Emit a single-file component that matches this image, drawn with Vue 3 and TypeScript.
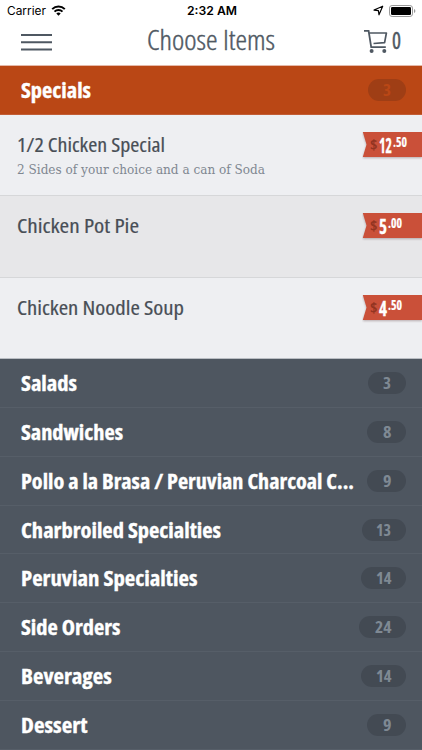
<script setup lang="ts">
import { h } from 'vue'

interface Item {
  title: string
  width: number
  note?: string
  dollars: string
  dollarsWidth: number
  cents: string
}
interface Category {
  name: string
  width: number
  count: number
  pill: number
  digits: number
}

// One line of condensed type: glyphs are narrowed to the given advance width.
const FitText = (props: { text: string; w: number; h: number; base: number }) =>
  h('svg', { width: props.w, height: props.h, overflow: 'visible' }, [
    h('text', { x: 0, y: props.base, textLength: props.w, lengthAdjust: 'spacingAndGlyphs' }, props.text),
  ])
FitText.props = ['text', 'w', 'h', 'base']

const items: Item[] = [
  { title: '1/2 Chicken Special', width: 148, note: '2 Sides of your choice and a can of Soda', dollars: '12', dollarsWidth: 13, cents: '.50' },
  { title: 'Chicken Pot Pie', width: 122, dollars: '5', dollarsWidth: 8, cents: '.00' },
  { title: 'Chicken Noodle Soup', width: 167, dollars: '4', dollarsWidth: 8, cents: '.50' },
]

const categories: Category[] = [
  { name: 'Salads', width: 56, count: 3, pill: 38, digits: 8 },
  { name: 'Sandwiches', width: 102, count: 8, pill: 39, digits: 8.5 },
  { name: 'Pollo a la Brasa / Peruvian Charcoal C...', width: 333, count: 9, pill: 39, digits: 8.5 },
  { name: 'Charbroiled Specialties', width: 200, count: 13, pill: 44, digits: 15 },
  { name: 'Peruvian Specialties', width: 176.5, count: 14, pill: 45, digits: 15.5 },
  { name: 'Side Orders', width: 99.5, count: 24, pill: 47, digits: 16.5 },
  { name: 'Beverages', width: 90.7, count: 14, pill: 45, digits: 15.5 },
  { name: 'Dessert', width: 66.5, count: 9, pill: 39, digits: 8.5 },
]
</script>

<template>
  <div class="screen">
    <div class="status">
      <div class="carrier">
        <FitText class="carrier-name" text="Carrier" :w="39" :h="20" :base="15" />
        <svg class="wifi" width="15" height="11" viewBox="0 0 15 11">
          <path d="M1.2 4.1a9 9 0 0 1 12.6 0M3.5 6.6a5.6 5.6 0 0 1 8 0" fill="none" stroke="#000" stroke-width="2" />
          <path d="M7.5 10.8 5.3 8.5a3.1 3.1 0 0 1 4.4 0z" />
        </svg>
      </div>
      <FitText class="clock" text="2:32 AM" :w="50" :h="20" :base="15" />
      <div class="indicators">
        <svg width="11" height="11" viewBox="0 0 11 11">
          <path d="M1 5.1 9.7 1.2 6 9.8 5.4 5.6z" fill="none" stroke="#000" stroke-width="1.15" stroke-linejoin="round" />
        </svg>
        <svg width="27" height="12" viewBox="0 0 27 12">
          <rect x=".5" y=".5" width="23" height="11" rx="2.6" fill="#fff" stroke="#999" />
          <rect x="2" y="2" width="20" height="8" rx="1.2" />
          <path d="M25 4v4q1.4-.6 1.4-2T25 4z" fill="#999" />
        </svg>
      </div>
    </div>

    <header class="bar">
      <svg class="menu" width="31" height="18" viewBox="0 0 31 18">
        <path d="M0 2h31M0 9.2h31M0 16.5h31" stroke="#4f5862" stroke-width="2" />
      </svg>
      <FitText class="heading" text="Choose Items" :w="128" :h="44" :base="28.8" />
      <div class="cart">
        <svg width="25" height="25" viewBox="0 0 25 25">
          <path d="M0 1.9h4.6L7.2 18.2h14.6" fill="none" stroke="#4f5862" stroke-width="1.8" />
          <path d="M5.2 4h17.2l-1.8 9.6L9.5 14.5" fill="none" stroke="#4f5862" stroke-width="1.7" stroke-linejoin="round" />
          <circle cx="7.6" cy="22" r="2" fill="#4f5862" />
          <circle cx="20.3" cy="22" r="2" fill="#4f5862" />
        </svg>
        <FitText class="cart-count" text="0" :w="9" :h="25" :base="19.7" />
      </div>
    </header>

    <div class="category active">
      <FitText class="name" text="Specials" :w="70" :h="48" :base="31.8" />
      <span class="pill pill-active">
        <FitText class="count" text="3" :w="8" :h="22" :base="17.2" />
      </span>
    </div>

    <ul class="items">
      <li v-for="item in items" :key="item.title" class="item">
        <div class="copy">
          <FitText class="title" :text="item.title" :w="item.width" :h="24" :base="21.2" />
          <FitText v-if="item.note" class="note" :text="item.note" :w="248" :h="20" :base="19.3" />
        </div>
        <div class="price">
          <svg class="ribbon" width="60" height="28" viewBox="0 0 60 28">
            <path class="ribbon-shape" d="M.8 0H60v25H.8L4.5 12.5z" />
          </svg>
          <div class="amount">
            <FitText class="currency" text="$" :w="7.5" :h="25" :base="18.3" />
            <FitText class="dollars" :text="item.dollars" :w="item.dollarsWidth" :h="25" :base="20.8" />
            <FitText class="cents" :text="item.cents" :w="14" :h="25" :base="15" />
          </div>
        </div>
      </li>
    </ul>

    <div class="categories">
      <div v-for="c in categories" :key="c.name" class="category">
        <FitText class="name" :text="c.name" :w="c.width" :h="48" :base="31.6" />
        <span class="pill" :style="{ width: c.pill + 'px' }">
          <FitText class="count" :text="String(c.count)" :w="c.digits" :h="22" :base="17.2" />
        </span>
      </div>
    </div>
  </div>
</template>

<style>
body {
  background: #4e5660;
}
</style>

<style scoped>
.screen {
  width: 422px;
  height: 750px;
  overflow: hidden;
  background: #fff;
  font-family: 'Open Sans', 'Noto Sans', sans-serif;
  font-stretch: 75%;
  color: #4b525b;
}
svg {
  display: block;
  flex: none;
}
.status {
  height: 21px;
  display: grid;
  grid-template-columns: 1fr auto 1fr;
  padding: 0 6px 0 7px;
  font-family: Inter, sans-serif;
  font-size: 11.5px;
}
.carrier,
.indicators {
  display: flex;
}
.carrier {
  gap: 5px;
}
.wifi {
  margin-top: 5px;
}
.clock {
  font-weight: 600;
}
.indicators {
  justify-content: flex-end;
  align-items: flex-start;
  gap: 5px;
  padding-top: 5px;
}
.bar {
  height: 44px;
  display: grid;
  grid-template-columns: 1fr auto 1fr;
  padding: 0 21px 0 21px;
  border-bottom: 1px solid #e5b9a9;
}
.menu {
  margin-top: 12px;
}
.heading {
  font-size: 27px;
  font-weight: 300;
  fill: #4f5862;
  stroke: #4f5862;
  stroke-width: 0.4px;
}
.cart {
  display: flex;
  justify-content: flex-end;
  gap: 3px;
  padding-top: 8px;
}
.cart-count {
  font-size: 23px;
  font-weight: 400;
  fill: #4f5862;
  stroke: #4f5862;
  stroke-width: 0.4px;
}
.category {
  box-sizing: border-box;
  height: 48.9px;
  display: flex;
  justify-content: space-between;
  padding: 0 16px 0 21px;
  border-bottom: 1px solid #565e68;
}
.categories {
  background: #4e5660;
}
.active {
  height: 49px;
  background: #ba4715;
  border-bottom-color: #c25d35;
}
.name {
  font-size: 21.5px;
  font-weight: 700;
  fill: #fff;
  stroke: #fff;
  stroke-width: 0.35px;
}
.pill {
  box-sizing: border-box;
  display: flex;
  justify-content: flex-end;
  width: 38px;
  height: 22px;
  margin-top: 13px;
  padding-right: 15px;
  border-radius: 11px;
  background: #434a53;
}
.pill-active {
  background: #9f3e15;
}
.count {
  font-size: 16.5px;
  font-weight: 700;
  fill: #7f8993;
}
.pill-active .count {
  fill: #ba4715;
}
.items {
  list-style: none;
  margin: 0;
  padding: 0;
}
.item {
  box-sizing: border-box;
  height: 81.3px;
  display: flex;
  justify-content: space-between;
  padding: 16px 0 0 17px;
  background: #eeeff2;
  border-bottom: 1px solid #d6d7d9;
}
.item:nth-child(2) {
  background: #e7e7e9;
}
.item:last-child {
  border-bottom-color: #b9bdc3;
}
.title {
  font-size: 20.8px;
  font-weight: 500;
  fill: #484e56;
  stroke: #484e56;
  stroke-width: 0.2px;
}
.note {
  font-family: 'DejaVu Serif Condensed', 'DejaVu Serif', serif;
  font-size: 13.6px;
  fill: #7f8791;
}
.price {
  display: grid;
  width: 60px;
  height: 28px;
  margin-top: 1px;
}
.ribbon,
.amount {
  grid-area: 1 / 1;
}
.ribbon-shape {
  fill: #ca5039;
  filter: drop-shadow(0 1px 1px rgba(80, 50, 50, 0.35));
}
.amount {
  display: flex;
  padding-left: 7.5px;
}
.currency {
  font-size: 14px;
  font-weight: 700;
  fill: #923421;
}
.dollars {
  margin-left: 2px;
  font-size: 21.5px;
  font-weight: 700;
  fill: #fff;
  stroke: #fff;
  stroke-width: 0.3px;
}
.cents {
  margin-left: 1px;
  font-size: 13.6px;
  font-weight: 700;
  fill: #fff;
  stroke: #fff;
  stroke-width: 0.2px;
}
</style>
